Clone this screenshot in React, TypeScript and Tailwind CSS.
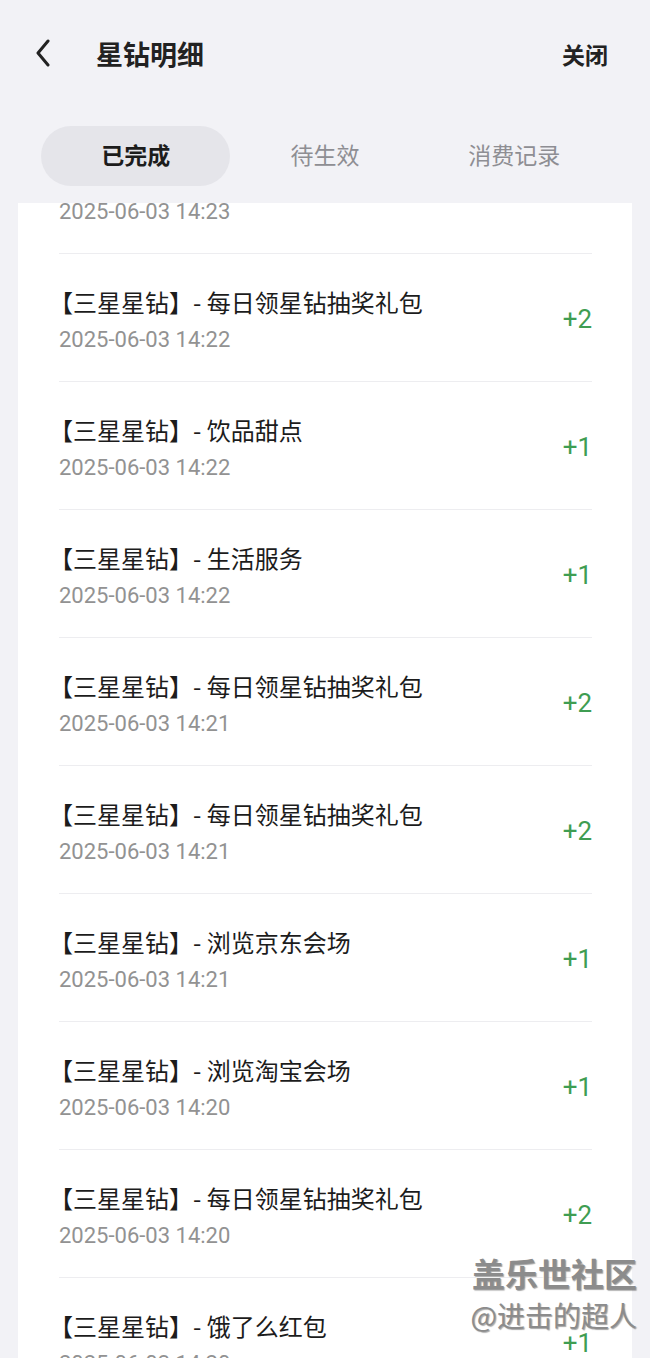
const ITEMS = [
  { title: '【三星星钻】- 每日领星钻抽奖礼包', time: '2025-06-03 14:23', amount: '+2' },
  { title: '【三星星钻】- 每日领星钻抽奖礼包', time: '2025-06-03 14:22', amount: '+2' },
  { title: '【三星星钻】- 饮品甜点', time: '2025-06-03 14:22', amount: '+1' },
  { title: '【三星星钻】- 生活服务', time: '2025-06-03 14:22', amount: '+1' },
  { title: '【三星星钻】- 每日领星钻抽奖礼包', time: '2025-06-03 14:21', amount: '+2' },
  { title: '【三星星钻】- 每日领星钻抽奖礼包', time: '2025-06-03 14:21', amount: '+2' },
  { title: '【三星星钻】- 浏览京东会场', time: '2025-06-03 14:21', amount: '+1' },
  { title: '【三星星钻】- 浏览淘宝会场', time: '2025-06-03 14:20', amount: '+1' },
  { title: '【三星星钻】- 每日领星钻抽奖礼包', time: '2025-06-03 14:20', amount: '+2' },
  { title: '【三星星钻】- 饿了么红包', time: '2025-06-03 14:20', amount: '+1' },
];

const TABS = ['已完成', '待生效', '消费记录'];

const cjk = 'font-["Noto_Sans_CJK_SC","Noto_Sans",sans-serif]';

function Row({ title, time, amount }: { title: string; time: string; amount: string }) {
  return (
    <div className="flex h-[128px] items-center border-b border-[#ededf0]">
      <div className="flex-1 self-start pt-[33px]">
        <div className={`${cjk} -ml-[10px] text-[24px] leading-[30px] text-[#1c1c1c]`}>{title}</div>
        <div className='mt-[9px] font-["Roboto",sans-serif] text-[22px] leading-[28px] text-[#929292]'>
          {time}
        </div>
      </div>
      <div className='pt-[3px] font-["Roboto",sans-serif] text-[26px] text-[#3f9d52]'>{amount}</div>
    </div>
  );
}

export default function App() {
  return (
    <div className={`relative h-[1358px] w-[650px] overflow-hidden bg-[#f2f2f6] ${cjk}`}>
      <div className="flex h-[110px] items-center pl-[35px] pr-[42px] pb-[2px]">
        <svg width="16" height="28" viewBox="0 0 16 28" fill="none" className="mt-[-2px] shrink-0">
          <path d="M13 2 L3 14 L13 26" stroke="#222" strokeWidth="3" strokeLinecap="round" strokeLinejoin="round" />
        </svg>
        <div className="ml-[45px] flex-1 text-[27px] font-bold text-[#222]">星钻明细</div>
        <div className="text-[23px] font-bold text-[#222]">关闭</div>
      </div>

      <div className="mt-[16px] grid grid-cols-3 px-[41px]">
        {TABS.map((t, i) => (
          <div
            key={t}
            className={
              i === 0
                ? 'flex h-[60px] items-center justify-center rounded-full bg-[#e5e5ea] pb-[4px] text-[23px] font-bold text-[#1c1c1c]'
                : 'flex h-[60px] items-center justify-center pb-[4px] text-[23px] text-[#8e8e93]'
            }
          >
            {t}
          </div>
        ))}
      </div>

      <div className="mx-[18px] mt-[17px] h-[1200px] overflow-hidden bg-white pl-[41px] pr-[40px]">
        <div className="-mt-[77px]">
          {ITEMS.map((it, i) => (
            <Row key={i} {...it} />
          ))}
        </div>
      </div>

      <div className="pointer-events-none absolute right-[13px] top-[1252px] flex flex-col items-end text-[#8c8c8c] [text-shadow:1px_1px_1px_rgba(0,0,0,0.35),-1px_-1px_1px_rgba(255,255,255,0.9)]">
        <div className="text-[33px] font-bold leading-[42px]">盖乐世社区</div>
        <div className="text-[28px] leading-[42px]">@进击的超人</div>
      </div>
    </div>
  );
}
